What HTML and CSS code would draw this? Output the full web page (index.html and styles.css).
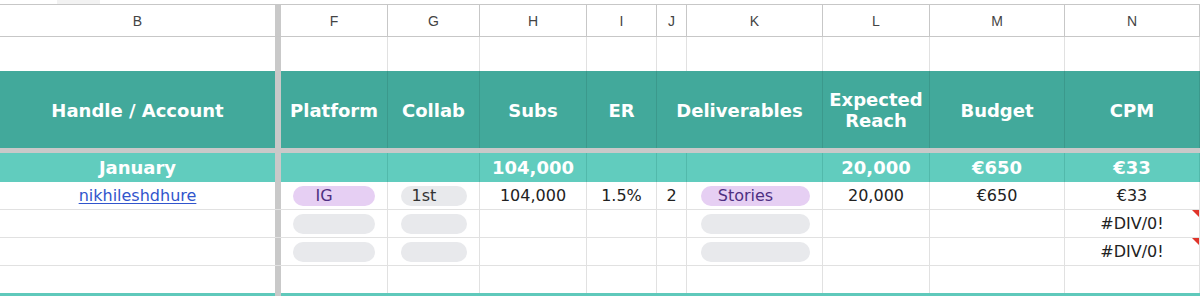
FILE: index.html
```html
<!DOCTYPE html>
<html>
<head>
<meta charset="utf-8">
<link rel="stylesheet" href="styles.css">
</head>
<body>
<div class="sheet">
  <div class="topstrip"><div class="thumb"></div></div>

  <div class="row letters">
    <div class="cell nb">B</div><div class="vsep"></div>
    <div class="cell">F</div><div class="cell">G</div><div class="cell">H</div><div class="cell">I</div><div class="cell">J</div><div class="cell">K</div><div class="cell">L</div><div class="cell">M</div><div class="cell">N</div>
  </div>

  <div class="row blank">
    <div class="cell nb"></div><div class="vsep"></div>
    <div class="cell"></div><div class="cell"></div><div class="cell"></div><div class="cell"></div><div class="cell"></div><div class="cell"></div><div class="cell"></div><div class="cell"></div><div class="cell"></div>
  </div>

  <div class="row head">
    <div class="cell nb">Handle / Account</div><div class="vsep"></div>
    <div class="cell">Platform</div><div class="cell">Collab</div><div class="cell">Subs</div><div class="cell">ER</div><div class="cell span2">Deliverables</div><div class="cell">Expected<br>Reach</div><div class="cell">Budget</div><div class="cell">CPM</div>
  </div>

  <div class="hsep"></div>

  <div class="row month">
    <div class="cell nb">January</div><div class="vsep"></div>
    <div class="cell"></div><div class="cell"></div><div class="cell">104,000</div><div class="cell"></div><div class="cell"></div><div class="cell"></div><div class="cell">20,000</div><div class="cell">€650</div><div class="cell">€33</div>
  </div>

  <div class="row data">
    <div class="cell nb"><a class="link" href="#">nikhileshdhure</a></div><div class="vsep"></div>
    <div class="cell chipcell f"><span class="chip purple">IG</span></div>
    <div class="cell chipcell g"><span class="chip grey">1st</span></div>
    <div class="cell">104,000</div><div class="cell">1.5%</div><div class="cell">2</div>
    <div class="cell chipcell k"><span class="chip purple">Stories</span></div>
    <div class="cell">20,000</div><div class="cell">€650</div><div class="cell">€33</div>
  </div>

  <div class="row data">
    <div class="cell nb"></div><div class="vsep"></div>
    <div class="cell chipcell f"><span class="chip grey"></span></div>
    <div class="cell chipcell g"><span class="chip grey"></span></div>
    <div class="cell"></div><div class="cell"></div><div class="cell"></div>
    <div class="cell chipcell k"><span class="chip grey"></span></div>
    <div class="cell"></div><div class="cell"></div><div class="cell err">#DIV/0!<span class="flag"></span></div>
  </div>

  <div class="row data">
    <div class="cell nb"></div><div class="vsep"></div>
    <div class="cell chipcell f"><span class="chip grey"></span></div>
    <div class="cell chipcell g"><span class="chip grey"></span></div>
    <div class="cell"></div><div class="cell"></div><div class="cell"></div>
    <div class="cell chipcell k"><span class="chip grey"></span></div>
    <div class="cell"></div><div class="cell"></div><div class="cell err">#DIV/0!<span class="flag"></span></div>
  </div>

  <div class="row data last">
    <div class="cell nb"></div><div class="vsep"></div>
    <div class="cell"></div><div class="cell"></div><div class="cell"></div><div class="cell"></div><div class="cell"></div><div class="cell"></div><div class="cell"></div><div class="cell"></div><div class="cell"></div>
  </div>

  <div class="row bottom">
    <div class="band"></div><div class="vsep"></div><div class="band rest"></div>
  </div>
</div>
</body>
</html>
```

FILE: styles.css
```css
html, body {
  margin: 0;
  padding: 0;
  background: #ffffff;
}

.sheet {
  width: 1200px;
  height: 296px;
  overflow: hidden;
  font-family: "DejaVu Sans", Verdana, sans-serif;
  color: #222222;
}

.topstrip {
  box-sizing: border-box;
  height: 5px;
  border-bottom: 1px solid #c7c7c7;
  padding-left: 57px;
}

.thumb {
  width: 43px;
  height: 4px;
  background: #f2f2f2;
}

.row {
  display: grid;
  grid-template-columns: 275px 6px 107px 92px 107px 70px 30px 136px 107px 135px 135px;
}

.cell {
  box-sizing: border-box;
  border-right: 1px solid #e1e1e1;
  display: flex;
  align-items: center;
  justify-content: center;
  text-align: center;
  position: relative;
  min-width: 0;
}

.cell.nb {
  border-right: none;
}

.vsep {
  background: #c9c9c9;
}

/* column letters */
.letters {
  height: 32px;
  box-sizing: border-box;
  border-bottom: 1px solid #c7c7c7;
  font-family: "Liberation Sans", Arial, sans-serif;
  font-size: 14px;
  color: #444444;
}

.letters .cell {
  border-right-color: #c7c7c7;
}

.blank {
  height: 34px;
}

/* header band */
.head {
  height: 77px;
  background: #42a99b;
  color: #ffffff;
  font-weight: bold;
  font-size: 18px;
  line-height: 21px;
}

.head .cell {
  border-right-color: #3b998c;
  padding-top: 1px;
}

.head .span2 {
  grid-column: span 2;
}

.hsep {
  height: 5px;
  background: #c9c9c9;
}

/* month summary row */
.month {
  height: 29px;
  background: #61ccbe;
  color: #ffffff;
  font-weight: bold;
  font-size: 18px;
}

.month .cell {
  border-right-color: #52b9ab;
}

/* data rows */
.data {
  height: 28px;
  box-sizing: border-box;
  border-bottom: 1px solid #e1e1e1;
  font-size: 16px;
}

.data.last {
  height: 27px;
  border-bottom: none;
}

.link {
  color: #3155cc;
  text-decoration: underline;
  text-underline-offset: 2px;
}

.chipcell {
  justify-content: stretch;
  align-items: center;
}

.chipcell.f { padding: 0 12px 0 12px; }
.chipcell.g { padding: 0 12px 0 13px; }
.chipcell.k { padding: 0 12px 0 14px; }

.chip {
  flex: 1;
  height: 20px;
  border-radius: 10px;
  box-sizing: border-box;
  padding-right: 20px;
  display: flex;
  align-items: center;
  justify-content: center;
  font-size: 16px;
  line-height: 20px;
}

.chip.purple {
  background: #e6cff3;
  color: #4e2f82;
}

.chip.grey {
  background: #e8e9ec;
  color: #333333;
}

.err {
  color: #222222;
}

.flag {
  position: absolute;
  top: 0;
  right: 0;
  width: 0;
  height: 0;
  border-top: 7px solid #e0342a;
  border-left: 7px solid transparent;
}

/* bottom teal band */
.bottom {
  height: 3px;
  grid-template-columns: 275px 6px 919px;
}

.band {
  background: #5fc9bb;
}
```
